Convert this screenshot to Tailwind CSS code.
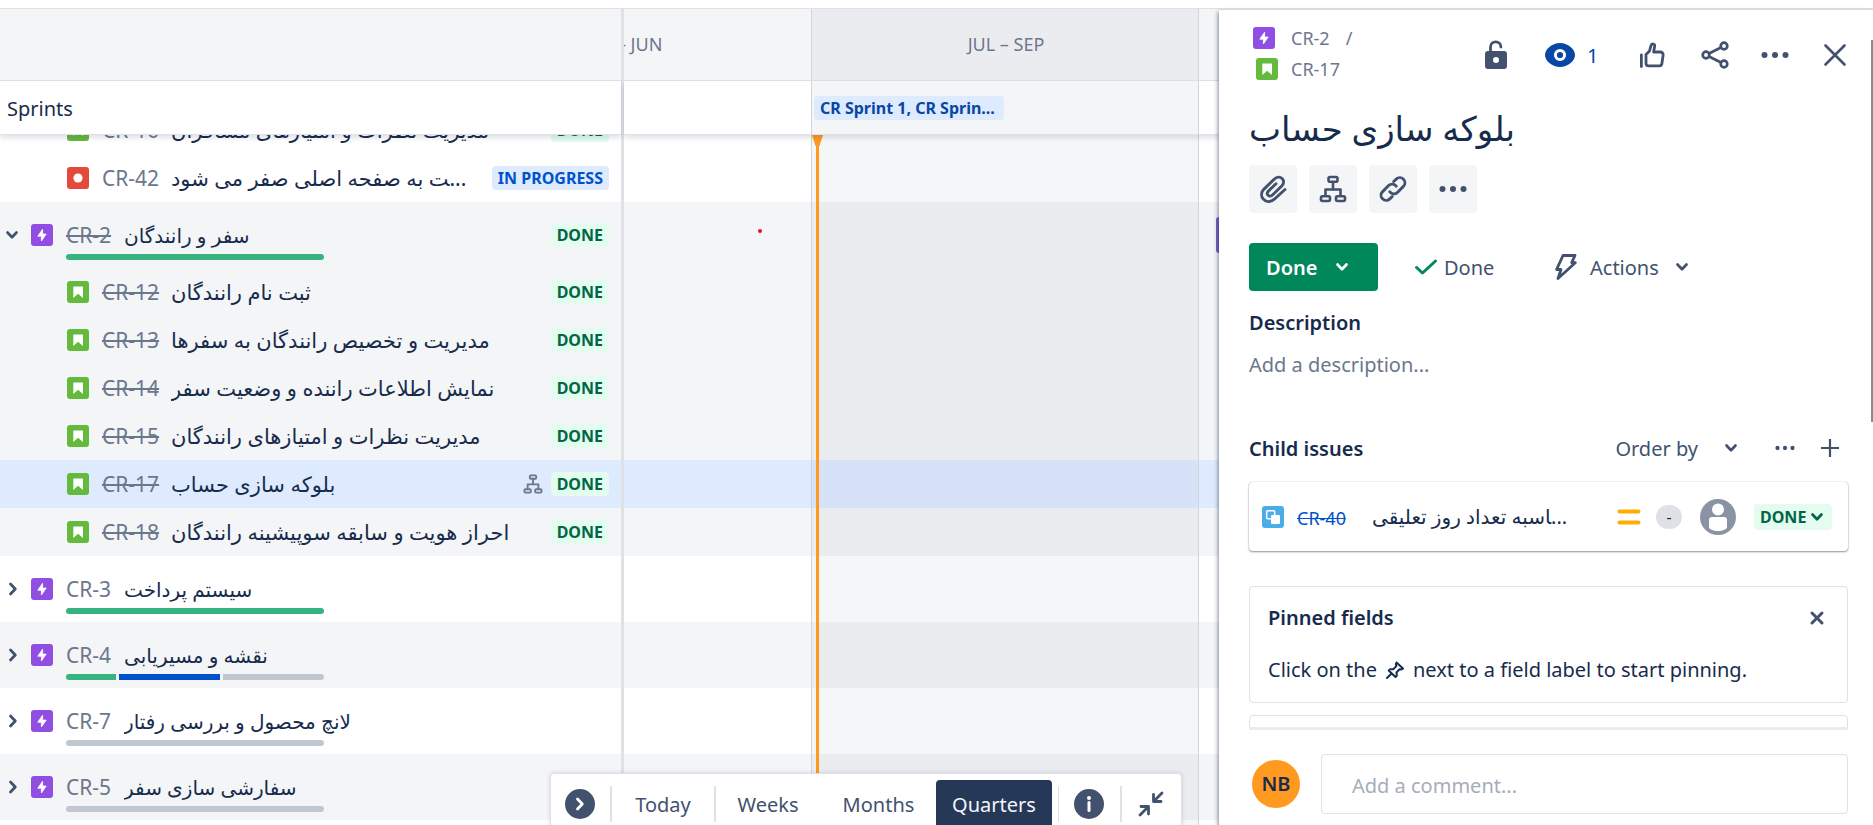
<!DOCTYPE html>
<html lang="en">
<head>
<meta charset="utf-8">
<title>Roadmap</title>
<script src="https://cdn.jsdelivr.net/npm/@tailwindcss/browser@4"></script>
</head>
<body class="h-screen overflow-hidden bg-white font-['Noto_Sans','DejaVu_Sans',sans-serif] text-xl text-[#172b4d]">
<svg class="hidden" aria-hidden="true">
  <symbol id="epic" viewBox="0 0 22 22"><rect width="22" height="22" rx="3" fill="#904ee2"/><path d="M11.6 5.2v4.9h3.6L10.4 17v-4.8H6.8z" fill="#fff" stroke="#fff" stroke-width=".8" stroke-linejoin="round"/></symbol>
  <symbol id="story" viewBox="0 0 22 22"><rect width="22" height="22" rx="3" fill="#63ba3c"/><path d="M7 5.5h8.500a.5.5 0 0 1 .5.5v11l-4.900-4.200L6.300 17V6a.5.5 0 0 1 .7-.5z" fill="#fff"/></symbol>
  <symbol id="bug" viewBox="0 0 22 22"><rect width="22" height="22" rx="3" fill="#e5493a"/><circle cx="11" cy="11" r="4.600" fill="#fff"/></symbol>
  <symbol id="subtask" viewBox="0 0 22 22"><rect width="22" height="22" rx="3" fill="#4bade8"/><rect x="4.700" y="4.700" width="8" height="8" rx="1" fill="none" stroke="#fff" stroke-width="1.500"/><rect x="9" y="9" width="9" height="9" rx="1" fill="#fff"/></symbol>
  <symbol id="right" viewBox="0 0 12 16"><path d="M3.500 3l4.800 5-4.800 5" fill="none" stroke="currentColor" stroke-width="2.800" stroke-linecap="round" stroke-linejoin="round"/></symbol>
  <symbol id="down" viewBox="0 0 14 10"><path d="M2.500 2.500L7 7.200l4.500-4.700" fill="none" stroke="currentColor" stroke-width="2.700" stroke-linecap="round" stroke-linejoin="round"/></symbol>
  <symbol id="tree" viewBox="0 0 28 28"><g fill="none" stroke="currentColor" stroke-width="2.600" stroke-linejoin="round"><rect x="9.500" y="2" width="9" height="4.700" rx="1.500"/><rect x="2" y="21.300" width="9" height="4.700" rx="1.500"/><rect x="17" y="21.300" width="9" height="4.700" rx="1.500"/><path d="M14 7v7M6.500 21v-6.500h15V21"/></g></symbol>
  <symbol id="dots" viewBox="0 0 28 8"><g fill="currentColor"><circle cx="3.500" cy="4" r="3"/><circle cx="14" cy="4" r="3"/><circle cx="24.500" cy="4" r="3"/></g></symbol>
  <symbol id="cross" viewBox="0 0 24 24"><path d="M2.500 2.500l19 19m0-19l-19 19" fill="none" stroke="currentColor" stroke-width="2.600" stroke-linecap="round"/></symbol>
</svg>

<div class="flex h-full flex-col">
  <div class="h-[9px] shrink-0 border-b border-[#dfe1e6]"></div>
  <div class="flex min-h-0 flex-1">

    <main class="relative flex min-w-0 flex-1 overflow-hidden">
      <section class="flex w-[624px] shrink-0 flex-col border-r-[3px] border-[#dfe1e6]" aria-label="Issues">
        <div class="h-[72px] shrink-0 border-b border-[#dfe1e6] bg-[#f4f5f7]"></div>
        <div class="z-10 flex h-[54px] shrink-0 items-center border-b border-[#dfe1e6] bg-white pt-0.5 pl-[7px] shadow-[0_3px_5px_rgba(9,30,66,0.13)]">Sprints</div>
        <div class="flex h-[19px] shrink-0 items-end overflow-hidden">
          <div class="flex h-12 w-full shrink-0 items-center pr-3 pl-[67px] text-[21px]">
            <svg class="mr-[13px] size-[22px] shrink-0"><use href="#story"/></svg>
            <a href="#" class="w-[69px] shrink-0 pt-0.5 text-[#6b778c]">CR-16</a>
            <span class="min-w-0 flex-1 truncate pt-0.5">مدیریت نظرات و امتیازهای مسافران</span>
            <span class="rounded bg-[#e3fcef] px-1.5 text-base leading-6 font-bold text-[#006644]">DONE</span>
          </div>
        </div>
        <div class="flex h-12 shrink-0 items-center pr-3 pl-[67px] text-[21px]">
          <svg class="mr-[13px] size-[22px] shrink-0"><use href="#bug"/></svg>
          <a href="#" class="w-[69px] shrink-0 pt-0.5 text-[#6b778c]">CR-42</a>
          <span class="min-w-0 flex-1 truncate pt-0.5">&zwj;ت به صفحه اصلی صفر می شود...</span>
          <span class="rounded bg-[#deebff] px-1.5 text-base leading-6 font-bold text-[#0052cc]">IN PROGRESS</span>
        </div>
        <div class="flex h-[66px] shrink-0 items-start bg-[#f4f5f7] pt-[19px] pr-3 pl-[5px]">
          <button class="mr-3 flex h-7 items-center text-[#42526e]" aria-label="Collapse CR-2"><svg class="h-[10px] w-[14px]"><use href="#down"/></svg></button>
          <svg class="mt-[3px] mr-[13px] size-[22px] shrink-0"><use href="#epic"/></svg>
          <div class="min-w-0 flex-1">
            <div class="flex h-7 items-center pt-0.5"><a href="#" class="w-[58px] shrink-0 text-[21px] text-[#6b778c]"><span class="line-through">CR-2</span></a><span class="truncate">سفر و رانندگان</span></div>
            <div class="mt-[5px] h-1.5 w-[258px] rounded-full bg-[#36b37e]"></div>
          </div>
          <span class="mt-0.5 rounded bg-[#e3fcef] px-1.5 text-base leading-6 font-bold text-[#006644]">DONE</span>
        </div>
        <div class="flex h-12 shrink-0 items-center bg-[#f4f5f7] pr-3 pl-[67px] text-[21px]">
          <svg class="mr-[13px] size-[22px] shrink-0"><use href="#story"/></svg>
          <a href="#" class="w-[69px] shrink-0 pt-0.5 text-[#6b778c]"><span class="line-through">CR-12</span></a>
          <span class="min-w-0 flex-1 truncate pt-0.5">ثبت نام رانندگان</span>
          <span class="rounded bg-[#e3fcef] px-1.5 text-base leading-6 font-bold text-[#006644]">DONE</span>
        </div>
        <div class="flex h-12 shrink-0 items-center bg-[#f4f5f7] pr-3 pl-[67px] text-[21px]">
          <svg class="mr-[13px] size-[22px] shrink-0"><use href="#story"/></svg>
          <a href="#" class="w-[69px] shrink-0 pt-0.5 text-[#6b778c]"><span class="line-through">CR-13</span></a>
          <span class="min-w-0 flex-1 truncate pt-0.5">مدیریت و تخصیص رانندگان به سفرها</span>
          <span class="rounded bg-[#e3fcef] px-1.5 text-base leading-6 font-bold text-[#006644]">DONE</span>
        </div>
        <div class="flex h-12 shrink-0 items-center bg-[#f4f5f7] pr-3 pl-[67px] text-[21px]">
          <svg class="mr-[13px] size-[22px] shrink-0"><use href="#story"/></svg>
          <a href="#" class="w-[69px] shrink-0 pt-0.5 text-[#6b778c]"><span class="line-through">CR-14</span></a>
          <span class="min-w-0 flex-1 truncate pt-0.5">نمایش اطلاعات راننده و وضعیت سفر</span>
          <span class="rounded bg-[#e3fcef] px-1.5 text-base leading-6 font-bold text-[#006644]">DONE</span>
        </div>
        <div class="flex h-12 shrink-0 items-center bg-[#f4f5f7] pr-3 pl-[67px] text-[21px]">
          <svg class="mr-[13px] size-[22px] shrink-0"><use href="#story"/></svg>
          <a href="#" class="w-[69px] shrink-0 pt-0.5 text-[#6b778c]"><span class="line-through">CR-15</span></a>
          <span class="min-w-0 flex-1 truncate pt-0.5">مدیریت نظرات و امتیازهای رانندگان</span>
          <span class="rounded bg-[#e3fcef] px-1.5 text-base leading-6 font-bold text-[#006644]">DONE</span>
        </div>
        <div class="flex h-12 shrink-0 items-center bg-[#deebff] pr-3 pl-[67px] text-[21px]">
          <svg class="mr-[13px] size-[22px] shrink-0"><use href="#story"/></svg>
          <a href="#" class="w-[69px] shrink-0 pt-0.5 text-[#6b778c]"><span class="line-through">CR-17</span></a>
          <span class="min-w-0 flex-1 truncate pt-0.5">بلوکه سازی حساب</span>
          <svg class="mr-2 size-5 shrink-0 text-[#6b778c]"><use href="#tree"/></svg>
          <span class="rounded bg-[#e3fcef] px-1.5 text-base leading-6 font-bold text-[#006644]">DONE</span>
        </div>
        <div class="flex h-12 shrink-0 items-center bg-[#f4f5f7] pr-3 pl-[67px] text-[21px]">
          <svg class="mr-[13px] size-[22px] shrink-0"><use href="#story"/></svg>
          <a href="#" class="w-[69px] shrink-0 pt-0.5 text-[#6b778c]"><span class="line-through">CR-18</span></a>
          <span class="min-w-0 flex-1 truncate pt-0.5">احراز هویت و سابقه سوپیشینه رانندگان</span>
          <span class="rounded bg-[#e3fcef] px-1.5 text-base leading-6 font-bold text-[#006644]">DONE</span>
        </div>
        <div class="flex h-[66px] shrink-0 items-start pt-[19px] pr-3 pl-[7px]">
          <button class="mr-3 flex h-7 items-center text-[#42526e]" aria-label="Expand CR-3"><svg class="h-4 w-3"><use href="#right"/></svg></button>
          <svg class="mt-[3px] mr-[13px] size-[22px] shrink-0"><use href="#epic"/></svg>
          <div class="min-w-0 flex-1">
            <div class="flex h-7 items-center pt-0.5"><a href="#" class="w-[58px] shrink-0 text-[21px] text-[#6b778c]">CR-3</a><span class="truncate">سیستم پرداخت</span></div>
            <div class="mt-[5px] h-1.5 w-[258px] rounded-full bg-[#36b37e]"></div>
          </div>
        </div>
        <div class="flex h-[66px] shrink-0 items-start bg-[#f4f5f7] pt-[19px] pr-3 pl-[7px]">
          <button class="mr-3 flex h-7 items-center text-[#42526e]" aria-label="Expand CR-4"><svg class="h-4 w-3"><use href="#right"/></svg></button>
          <svg class="mt-[3px] mr-[13px] size-[22px] shrink-0"><use href="#epic"/></svg>
          <div class="min-w-0 flex-1">
            <div class="flex h-7 items-center pt-0.5"><a href="#" class="w-[58px] shrink-0 text-[21px] text-[#6b778c]">CR-4</a><span class="truncate">نقشه و مسیریابی</span></div>
            <div class="mt-[5px] grid h-1.5 w-[258px] grid-cols-[1fr_2fr_2fr] gap-[3px] overflow-hidden rounded-full"><div class="bg-[#36b37e]"></div><div class="bg-[#0052cc]"></div><div class="bg-[#c1c7d0]"></div></div>
          </div>
        </div>
        <div class="flex h-[66px] shrink-0 items-start pt-[19px] pr-3 pl-[7px]">
          <button class="mr-3 flex h-7 items-center text-[#42526e]" aria-label="Expand CR-7"><svg class="h-4 w-3"><use href="#right"/></svg></button>
          <svg class="mt-[3px] mr-[13px] size-[22px] shrink-0"><use href="#epic"/></svg>
          <div class="min-w-0 flex-1">
            <div class="flex h-7 items-center pt-0.5"><a href="#" class="w-[58px] shrink-0 text-[21px] text-[#6b778c]">CR-7</a><span class="truncate">لانچ محصول و بررسی رفتار</span></div>
            <div class="mt-[5px] h-1.5 w-[258px] rounded-full bg-[#c1c7d0]"></div>
          </div>
        </div>
        <div class="flex h-[66px] shrink-0 items-start bg-[#f4f5f7] pt-[19px] pr-3 pl-[7px]">
          <button class="mr-3 flex h-7 items-center text-[#42526e]" aria-label="Expand CR-5"><svg class="h-4 w-3"><use href="#right"/></svg></button>
          <svg class="mt-[3px] mr-[13px] size-[22px] shrink-0"><use href="#epic"/></svg>
          <div class="min-w-0 flex-1">
            <div class="flex h-7 items-center pt-0.5"><a href="#" class="w-[58px] shrink-0 text-[21px] text-[#6b778c]">CR-5</a><span class="truncate">سفارشی سازی سفر</span></div>
            <div class="mt-[5px] h-1.5 w-[258px] rounded-full bg-[#c1c7d0]"></div>
          </div>
        </div>
      </section>

      <section class="flex min-w-0 flex-1 flex-col" aria-label="Timeline">
        <div class="grid h-[72px] shrink-0 grid-cols-[188px_387px_1fr] border-b border-[#dfe1e6] bg-[#f4f5f7] text-lg text-[#6b778c]">
          <div class="flex items-center justify-end overflow-hidden border-r border-[#d0d4db] pb-0.5"><div class="w-[387px] shrink-0 pl-1.5 text-center">APR – JUN</div></div>
          <div class="flex items-center justify-center border-r border-[#d0d4db] bg-[#ebecf0] pb-0.5 pl-0.5">JUL – SEP</div>
        </div>
        <div class="z-10 grid h-[54px] shrink-0 grid-cols-[188px_387px_1fr] border-b border-[#dfe1e6] bg-white shadow-[0_3px_5px_rgba(9,30,66,0.13)]">
          <div class="border-r border-[#d0d4db]"></div>
          <div class="flex items-center border-r border-[#d0d4db] bg-[#f4f5f7] pl-0.5"><span class="w-[190px] truncate rounded bg-[#deebff] px-1.5 text-base leading-6 font-bold text-[#0747a6]">CR Sprint 1, CR Sprin...</span></div>
        </div>
        <div class="relative min-h-0 flex-1 overflow-hidden">
          <div class="h-[67px]"></div>
          <div class="flex h-[258px] justify-end bg-[#f4f5f7]"><div class="mt-[15px] h-9 w-[3px] rounded-l bg-[#7565c4]"></div></div>
          <div class="h-12 bg-[#deebff]"></div>
          <div class="h-12 bg-[#f4f5f7]"></div>
          <div class="h-[66px]"></div>
          <div class="h-[66px] bg-[#f4f5f7]"></div>
          <div class="h-[66px]"></div>
          <div class="h-[66px] bg-[#f4f5f7]"></div>
          <div class="absolute inset-0 grid grid-cols-[188px_387px_1fr]">
            <div class="border-r border-[#d0d4db]"></div>
            <div class="relative border-r border-[#d0d4db] bg-[#091e42]/4">
              <div class="absolute top-0 left-1 h-full w-[3px] bg-[#ff991f]"></div>
              <svg class="absolute top-0 left-0 h-3 w-[11px]" viewBox="0 0 11 12"><path d="M0 0h11L7.500 11h-4z" fill="#ff991f"/></svg>
            </div>
          </div>
          <div class="absolute top-[94px] left-[134px] size-1 rounded-full bg-[#e5141e]"></div>
        </div>
      </section>

      <nav class="absolute right-[37px] -bottom-[9px] z-20 flex h-[61px] w-[632px] items-center rounded border border-[#dfe1e6] bg-white px-[14px] text-[#42526e] shadow-[0_0_4px_rgba(9,30,66,0.15)]" aria-label="Timeline controls">
        <button class="flex size-[30px] shrink-0 items-center justify-center rounded-full bg-[#42526e] text-white" aria-label="Scroll"><svg class="h-4 w-3"><use href="#right"/></svg></button>
        <div class="ml-[15px] h-9 w-0.5 bg-[#dfe1e6]"></div>
        <button class="h-12 w-[102px] pt-0.5">Today</button>
        <div class="h-9 w-0.5 bg-[#dfe1e6]"></div>
        <button class="h-12 w-[104px] pt-0.5">Weeks</button>
        <button class="ml-px h-12 w-[115px] pt-0.5">Months</button>
        <button class="h-12 w-[116px] rounded bg-[#253858] pt-0.5 text-[#f4f5f7]">Quarters</button>
        <div class="ml-1.5 h-9 w-px bg-[#dfe1e6]"></div>
        <button class="ml-[15px] flex size-[30px] shrink-0 items-center justify-center rounded-full bg-[#42526e]" aria-label="Legend"><svg class="size-5" viewBox="0 0 20 20"><circle cx="10" cy="4" r="2" fill="#fff"/><path d="M10 8.500v8" stroke="#fff" stroke-width="3" stroke-linecap="round"/></svg></button>
        <div class="ml-4 h-9 w-0.5 bg-[#dfe1e6]"></div>
        <button class="ml-4" aria-label="Collapse"><svg class="size-[26px]" viewBox="0 0 26 26"><g fill="none" stroke="currentColor" stroke-width="2.800" stroke-linecap="round" stroke-linejoin="round"><path d="M24 2l-8.500 8.500M15.500 3.500v7h7.500M2 24l8.500-8.500M3 15.500h7.500v7.500"/></g></svg></button>
      </nav>
    </main>

    <aside class="relative z-30 flex w-[654px] shrink-0 flex-col border-t border-[#d8dae0] bg-white shadow-[-1px_3px_4px_rgba(9,30,66,0.5)]" aria-label="Issue details">
      <div class="absolute top-[30px] right-0 h-[382px] w-0.5 bg-[#8a8a8a]"></div>
      <div class="min-h-0 flex-1 overflow-hidden pr-[25px] pl-[30px]">
        <header class="mt-3 flex h-[62px] justify-between text-[#42526e]">
          <div class="text-lg text-[#6b778c]">
            <div class="flex h-[31px] items-center pl-1"><svg class="mr-4 size-[22px]"><use href="#epic"/></svg><a href="#">CR-2</a><span class="ml-4">/</span></div>
            <div class="flex h-[31px] items-center pl-[7px]"><svg class="mr-[13px] size-[22px]"><use href="#story"/></svg><a href="#">CR-17</a></div>
          </div>
          <div class="-mr-[11px] flex items-center gap-3 pt-1">
            <button class="flex h-12 w-12 items-center justify-center" aria-label="Restrict"><svg class="h-[30px] w-6" viewBox="0 0 24 30"><path d="M6.500 12V7a5.200 5.200 0 0 1 10.400 0" fill="none" stroke="currentColor" stroke-width="2.800" stroke-linecap="round"/><rect x="1" y="11" width="22" height="18" rx="3" fill="currentColor"/><circle cx="12" cy="20" r="3" fill="#fff"/></svg></button>
            <button class="flex h-12 w-[88px] items-center pl-[13px] text-[#0747a6]"><svg class="mr-3 h-6 w-[30px]" viewBox="0 0 30 24"><path d="M15 0C7.500 0 0 6 0 12s7.500 12 15 12 15-6 15-12S22.500 0 15 0z" fill="currentColor"/><circle cx="15" cy="12" r="4.600" fill="currentColor" stroke="#fff" stroke-width="3"/></svg><span class="pt-0.5">1</span></button>
            <button class="mr-[3px] -ml-1 flex h-12 w-12 items-center justify-center" aria-label="Vote"><svg class="size-[26px]" viewBox="0 0 26 26"><g fill="none" stroke="currentColor" stroke-width="2.800" stroke-linecap="round" stroke-linejoin="round"><path d="M2.400 13v11.500"/><path d="M7 12.500l3.500-3.500 1.500-5.500c.6-2.400 4.200-1.800 3.700.7L14.600 10h6.600c2 0 3.200 1.500 2.900 3.300l-1.200 8.200c-.2 1.500-1.200 2.400-2.700 2.400H9.600C8 23.900 7 22.900 7 21.300z"/></g></svg></button>
            <button class="flex h-12 w-12 items-center justify-center" aria-label="Share"><svg class="size-7" viewBox="0 0 28 28"><g fill="none" stroke="currentColor" stroke-width="2.700"><circle cx="5" cy="14" r="3.300"/><circle cx="23" cy="5" r="3.300"/><circle cx="23" cy="23" r="3.300"/><path d="M8 12.500l12-6M8 15.500l12 6"/></g></svg></button>
            <button class="flex h-12 w-12 items-center justify-center" aria-label="More actions"><svg class="h-2 w-7"><use href="#dots"/></svg></button>
            <button class="flex h-12 w-12 items-center justify-center" aria-label="Close"><svg class="size-6"><use href="#cross"/></svg></button>
          </div>
        </header>
        <h1 class="mt-2.5 h-16 pt-0.5 text-[34px] leading-[64px]">بلوکه سازی حساب</h1>
        <div class="mt-[7px] flex gap-3 text-[#42526e]">
          <button class="flex size-12 items-center justify-center rounded bg-[#f4f5f7]" aria-label="Attach"><svg class="size-7" viewBox="0 0 28 28"><path d="M26 14.500L15.300 24.200C12 27 7.500 27.500 4.500 24.300c-3-3.200-2.300-7.300.5-10.200L15.400 4c2.300-2.200 5.600-2.600 7.700-.4 2.100 2.200 1.800 5.200-.4 7.400l-9.200 9c-1.300 1.300-3.200 1.500-4.400.3-1.200-1.300-.9-3 .3-4.200l7.600-7.400" fill="none" stroke="currentColor" stroke-width="2.900" stroke-linecap="round" stroke-linejoin="round"/></svg></button>
          <button class="flex size-12 items-center justify-center rounded bg-[#f4f5f7]" aria-label="Add child issue"><svg class="size-7"><use href="#tree"/></svg></button>
          <button class="flex size-12 items-center justify-center rounded bg-[#f4f5f7]" aria-label="Link"><svg class="size-7" viewBox="0 0 28 28"><g fill="none" stroke="currentColor" stroke-width="2.900" stroke-linecap="round" stroke-linejoin="round"><path d="M10.800 16.800a5 5 0 0 0 7.600.6l6-6a5.100 5.100 0 0 0-7.200-7.300l-2.500 2.400"/><path d="M17.200 11.200a5 5 0 0 0-7.600-.6l-6 6a5.100 5.100 0 0 0 7.200 7.300l2.500-2.400"/></g></svg></button>
          <button class="flex size-12 items-center justify-center rounded bg-[#f4f5f7]" aria-label="More"><svg class="h-2 w-7"><use href="#dots"/></svg></button>
        </div>
        <div class="mt-[30px] flex h-12 items-center text-[#42526e]">
          <button class="flex h-12 w-[129px] items-center rounded bg-[#00875a] pl-[17px] font-semibold text-white"><span class="pt-0.5">Done</span><svg class="ml-[18px] h-[10px] w-[14px]"><use href="#down"/></svg></button>
          <svg class="ml-9 h-[18px] w-6" viewBox="0 0 24 18"><path d="M2.500 9.500l6 5.500L21.500 3" fill="none" stroke="#00875a" stroke-width="3" stroke-linecap="round" stroke-linejoin="round"/></svg>
          <span class="ml-1.5 w-[110px] pt-0.5">Done</span>
          <button class="flex h-12 items-center"><svg class="mr-3 h-7 w-6" viewBox="0 0 24 28"><path d="M9 2.500h12l-3.300 7.200h3.600L4 25.500l3-9H2.600z" fill="none" stroke="currentColor" stroke-width="2.800" stroke-linejoin="round"/></svg><span class="pt-0.5">Actions</span><svg class="ml-4 h-[10px] w-[14px]"><use href="#down"/></svg></button>
        </div>
        <h2 class="mt-[18px] leading-7 font-semibold">Description</h2>
        <p class="mt-[14px] leading-7 text-[#6b778c]">Add a description...</p>
        <div class="mt-[53px] flex h-8 items-center text-[#42526e]">
          <h2 class="flex-1 pt-0.5 font-semibold text-[#172b4d]">Child issues</h2>
          <button class="flex items-center"><span class="pt-0.5">Order by</span><svg class="ml-[26px] h-[10px] w-[14px]"><use href="#down"/></svg></button>
          <button class="ml-[37px]" aria-label="More"><svg class="h-[6px] w-5"><use href="#dots"/></svg></button>
          <button class="mr-2 ml-[25px]" aria-label="Add child"><svg class="size-5" viewBox="0 0 20 20"><path d="M10 1v18M1 10h18" stroke="currentColor" stroke-width="2.200" fill="none"/></svg></button>
        </div>
        <div class="mt-[18px] flex h-[69px] items-center rounded bg-white pr-4 pl-[13px] shadow-[0_1px_2px_rgba(9,30,66,0.45),0_0_1px_rgba(9,30,66,0.4)]">
          <svg class="mr-[13px] size-[22px] shrink-0"><use href="#subtask"/></svg>
          <a href="#" class="w-[75px] shrink-0 pt-0.5 text-lg text-[#0052cc]"><span class="line-through">CR-40</span></a>
          <span class="min-w-0 flex-1 truncate">&zwj;اسبه تعداد روز تعلیقی...</span>
          <svg class="h-[18px] w-6 shrink-0" viewBox="0 0 24 18"><path d="M2.500 3.500h19M2.500 14.500h19" stroke="#ffab00" stroke-width="4" stroke-linecap="round"/></svg>
          <span class="ml-[15px] flex h-6 w-[26px] items-center justify-center rounded-full bg-[#dfe1e6] text-base">-</span>
          <svg class="ml-[18px] size-9 shrink-0" viewBox="0 0 36 36"><circle cx="18" cy="18" r="18" fill="#8993a4"/><circle cx="18" cy="10.500" r="6" fill="#fff"/><path d="M9 21a3 3 0 0 1 3-3h12a3 3 0 0 1 3 3v7c0 2-4 4-9 4s-9-2-9-4z" fill="#fff"/></svg>
          <button class="ml-[18px] flex h-[26px] w-[78px] items-center gap-1 rounded bg-[#e3fcef] pl-1.5 text-base font-bold text-[#006644]">DONE<svg class="h-[10px] w-[14px]"><use href="#down"/></svg></button>
        </div>
        <section class="mt-[35px] h-[117px] rounded border border-[#dfe1e6] pr-[22px] pl-[18px]">
          <div class="mt-[15px] flex h-8 items-center justify-between"><h2 class="font-semibold">Pinned fields</h2><button class="text-[#42526e]" aria-label="Dismiss"><svg class="size-4" viewBox="0 0 16 16"><path d="M3 3l10 10m0-10L3 13" stroke="currentColor" stroke-width="3" stroke-linecap="round"/></svg></button></div>
          <p class="mt-5 flex h-8 items-center whitespace-nowrap">Click on the<svg class="mx-2 size-5" viewBox="0 0 20 20"><path d="M11.500 2.500l6.500 6-2 1-1.500-.2-3 3.200.3 3-1.300 1.500-6.800-6.500 1.500-1.300 3 .1 3.200-3.200-.6-1.800zM6.500 13.500L2 18" fill="none" stroke="currentColor" stroke-width="2" stroke-linejoin="round" stroke-linecap="round"/></svg>next to a field label to start pinning.</p>
        </section>
        <div class="mt-3 h-10 rounded border border-[#dfe1e6]"></div>
      </div>
      <footer class="flex h-[98px] shrink-0 flex-col pr-[25px] pl-[30px]">
        <div class="h-[3px] bg-[#ebecf0]"></div>
        <div class="mt-6 flex items-center">
          <span class="ml-[3px] flex size-12 items-center justify-center rounded-full bg-[#ff991f] font-semibold">NB</span>
          <input class="ml-[21px] h-[60px] min-w-0 flex-1 rounded border border-[#dfe1e6] pt-0.5 pl-[30px] placeholder:text-[#a5adba]" type="text" aria-label="Comment" placeholder="Add a comment...">
        </div>
      </footer>
    </aside>
  </div>
</div>
</body>
</html>
